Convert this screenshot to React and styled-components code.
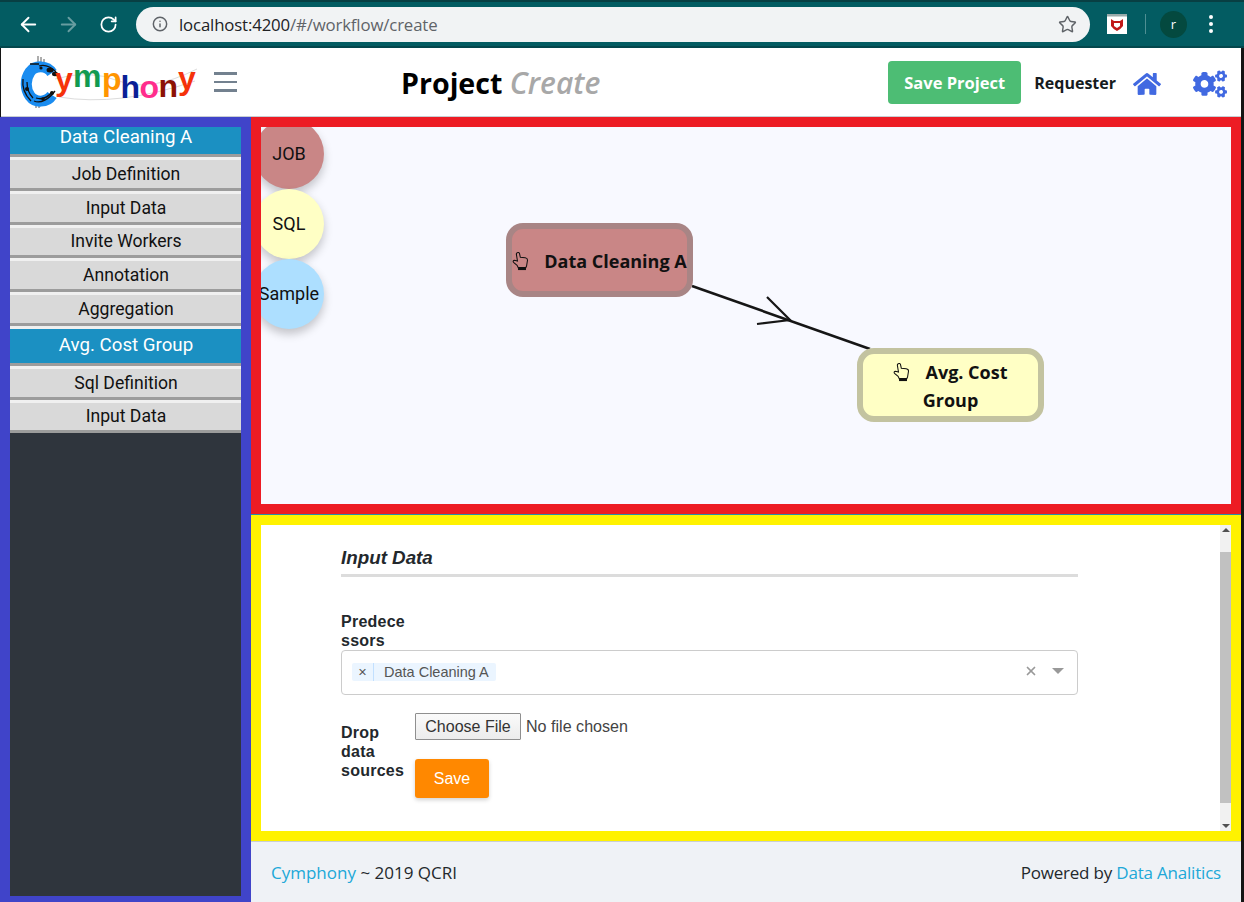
import React from 'react'
import styled, { createGlobalStyle } from 'styled-components'
import { ArrowLeft, ArrowRight, RotateCw, Info, Star, X } from 'lucide-react'
import { FaHome, FaCogs } from 'react-icons/fa'

const Global = createGlobalStyle`
  html, body { margin: 0; padding: 0; background: #141414; }
  * { box-sizing: border-box; }
`

const Logo = () => (
  <LogoSvg viewBox="0 0 180 54" width="180" height="54">
    <path d="M36 24 Q70 14 100 26 T178 14 M40 42 Q100 52 176 26" fill="none" stroke="#dcdcdc" strokeWidth="1" />
    <path d="M19 1 V13 M22 2 V13 M25 4 V14 M17 41 V53 M20 41 V53 M23 41 V51" stroke="#777" strokeWidth="1.2" fill="none" />
    <path d="M33 18 C28 10 16 10 11 17 C6 24 6 34 11 41 C16 48 28 48 33 40" fill="none" stroke="#1a8cf0" strokeWidth="11" />
    <path d="M11 9 H20 M20 11 C26 9 32 12 37 17 M4 24 C3 32 6 40 12 46 M8 27 C8 33 10 39 14 43 M15 46 C22 49 30 44 36 36 M17 43 C23 45 29 42 33 37" stroke="#111" strokeWidth="1.3" fill="none" />
    <ellipse cx="31" cy="15" rx="3.5" ry="2.5" fill="#111" />
    <ellipse cx="36" cy="19" rx="3" ry="2.2" fill="#111" />
    <circle cx="8" cy="34" r="2" fill="#111" />
    <circle cx="22" cy="13" r="1.6" fill="#111" />
    <circle cx="24" cy="44" r="1.8" fill="#111" />
    <circle cx="33" cy="38" r="2" fill="#111" />
    <LogoLetter x="36" y="35" fill="#f5320a">y</LogoLetter>
    <LogoLetter x="54" y="32" fill="#129a50">m</LogoLetter>
    <LogoLetter x="83" y="35" fill="#ff9500">p</LogoLetter>
    <LogoLetter x="101.5" y="43" fill="#0a1f96">h</LogoLetter>
    <LogoLetter x="120.5" y="43" fill="#ff2d8c">o</LogoLetter>
    <LogoLetter x="139.5" y="42" fill="#8c1205">n</LogoLetter>
    <LogoLetter x="159" y="34" fill="#f5320a">y</LogoLetter>
  </LogoSvg>
)

const Hand = () => (
  <HandSvg viewBox="0 0 18 20" width="17" height="20">
    <path d="M5.5 1.2 C6.6 .6 7.6 1 7.9 2 L8.8 6 L14 6.6 C15.6 6.9 16.6 8 16.4 9.4 L15.4 15.4 L14.6 17 H6.6 L5.4 14.6 L1.6 11.4 C.8 10.4 1.2 9.2 2.6 9.2 L5.8 10 L4.6 2.8 C4.5 2.1 4.9 1.5 5.5 1.2 Z" fill="none" stroke="#111" strokeWidth="1.1" />
    <rect x="6.4" y="16.4" width="8.4" height="3.2" fill="#111" />
  </HandSvg>
)

const App = () => {
  return (
    <Page>
      <Global />
      <Chrome>
        <NavIcon><ArrowLeft size={23} strokeWidth={2} /></NavIcon>
        <NavIcon faded><ArrowRight size={23} strokeWidth={2} /></NavIcon>
        <NavIcon shift><RotateCw size={19} strokeWidth={2.2} /></NavIcon>
        <Omnibox>
          <Info size={16} color="#5f6368" strokeWidth={2.2} />
          <Url>localhost:4200<UrlPath>/#/workflow/create</UrlPath></Url>
          <Star size={19} color="#5f6368" strokeWidth={1.8} />
        </Omnibox>
        <Extension>
          <svg viewBox="0 0 20 20" width="20" height="20">
            <rect width="20" height="20" fill="#fff" />
            <rect width="20" height="2.5" fill="#9aa" />
            <path d="M4 5 L7 7 H13 L16 5 V12 Q13 16 10 17 Q7 16 4 12 Z M7 9 V12 L10 14 L13 12 V9 Z" fill="#c01818" fillRule="evenodd" />
          </svg>
        </Extension>
        <ChromeDivider />
        <Avatar>r</Avatar>
        <Kebab><i /><i /><i /></Kebab>
      </Chrome>
      <Shell>
        <Header>
          <Logo />
          <Burger><i /><i /><i /></Burger>
          <Title>Project <em>Create</em></Title>
          <SaveProject>Save Project</SaveProject>
          <Role>Requester</Role>
          <HeaderIcon home><FaHome size={28} /></HeaderIcon>
          <HeaderIcon><FaCogs size={34} /></HeaderIcon>
        </Header>
        <Body>
          <Sidebar>
            <SideList>
              <SideHead>Data Cleaning A</SideHead>
              <SideItem>Job Definition</SideItem>
              <SideItem>Input Data</SideItem>
              <SideItem>Invite Workers</SideItem>
              <SideItem>Annotation</SideItem>
              <SideItem>Aggregation</SideItem>
              <SideHead>Avg. Cost Group</SideHead>
              <SideItem>Sql Definition</SideItem>
              <SideItem>Input Data</SideItem>
            </SideList>
          </Sidebar>
          <Main>
            <Canvas>
              <Palette>
                <Bubble color="#c98686">JOB</Bubble>
                <Bubble color="#ffffc5">SQL</Bubble>
                <Bubble color="#addfff">Sample</Bubble>
              </Palette>
              <Edge viewBox="0 0 970 378" width="970" height="378">
                <path d="M431 159 L609 222" stroke="#161616" strokeWidth="2.6" fill="none" />
                <path d="M506 170 L529 193 L496 197" stroke="#161616" strokeWidth="2.2" fill="none" />
              </Edge>
              <Node left={245} top={96} color="#c98686" edge="#a88585">
                <NodeText><Hand />Data Cleaning A</NodeText>
              </Node>
              <Node left={596} top={221} color="#ffffc5" edge="#c3c3a0">
                <NodeText><Hand />Avg. Cost<br />Group</NodeText>
              </Node>
            </Canvas>
            <FormPanel>
              <FormScroll>
                <Form>
                  <FormTitle>Input Data</FormTitle>
                  <FieldLabel>Predecessors</FieldLabel>
                  <SelectBox>
                    <Tag><TagClose>×</TagClose><TagText>Data Cleaning A</TagText></Tag>
                    <SelectClear><X size={14} strokeWidth={3} /></SelectClear>
                    <SelectCaret />
                  </SelectBox>
                  <UploadRow>
                    <FieldLabel drop>Drop data sources</FieldLabel>
                    <UploadCol>
                      <FileInput type="file" />
                      <SaveButton>Save</SaveButton>
                    </UploadCol>
                  </UploadRow>
                </Form>
              </FormScroll>
              <Scrollbar>
                <ScrollArrow />
                <ScrollTrack><ScrollThumb /></ScrollTrack>
                <ScrollArrow down />
              </Scrollbar>
            </FormPanel>
            <Footer>
              <FootLeft><FootLink>Cymphony</FootLink> ~ 2019 QCRI</FootLeft>
              <span>Powered by <FootLink>Data Analitics</FootLink></span>
            </Footer>
          </Main>
        </Body>
      </Shell>
    </Page>
  )
}

export default App

const Page = styled.div`
  height: 902px;
  display: flex;
  flex-direction: column;
  overflow: hidden;
`

const Chrome = styled.div`
  height: 48px;
  flex: none;
  display: flex;
  align-items: center;
  background: #035c62;
  border-top: 2px solid #083f43;
  border-bottom: 2px solid #04474c;
  padding-left: 17px;
  color: #fff;
`

const NavIcon = styled.div`
  width: 40px;
  display: flex;
  padding-left: ${p => (p.shift ? '2px' : '0')};
  opacity: ${p => (p.faded ? 0.4 : 1)};
`

const Omnibox = styled.div`
  width: 954px;
  height: 35px;
  margin-left: -1px;
  padding: 0 13px 0 16px;
  border-radius: 18px;
  background: #f1f3f4;
  display: flex;
  align-items: center;
`

const Url = styled.div`
  flex: 1;
  margin-left: 11px;
  font: 16.8px "Open Sans", sans-serif;
  letter-spacing: -0.15px;
  color: #202124;
`

const UrlPath = styled.span`
  color: #5f6368;
`

const Extension = styled.div`
  margin-left: 17px;
  height: 20px;
`

const ChromeDivider = styled.div`
  width: 1px;
  height: 20px;
  margin-left: 18px;
  background: #4f8f93;
`

const Avatar = styled.div`
  width: 27px;
  height: 27px;
  margin-left: 14px;
  border-radius: 50%;
  background: #04493f;
  display: flex;
  align-items: center;
  justify-content: center;
  font: 13px "Open Sans", sans-serif;
`

const Kebab = styled.div`
  margin-left: 22px;
  display: flex;
  flex-direction: column;
  gap: 3px;

  i {
    width: 4px;
    height: 4px;
    border-radius: 50%;
    background: #fff;
  }
`

const Shell = styled.div`
  flex: 1;
  min-height: 0;
  margin-right: 3px;
  display: flex;
  flex-direction: column;
`

const Header = styled.header`
  height: 69px;
  flex: none;
  display: flex;
  align-items: center;
  background: #fff;
  border-bottom: 1px solid #c8ced3;
  margin-left: 1px;
  padding-left: 18px;
  font-family: "Open Sans", sans-serif;
`

const LogoSvg = styled.svg`
  flex: none;
`

const LogoLetter = styled.text`
  font-family: "Liberation Sans", sans-serif;
  font-weight: 700;
  font-size: 32px;
`

const Burger = styled.div`
  width: 23px;
  margin-left: 15px;
  display: flex;
  flex-direction: column;
  gap: 6px;

  i {
    height: 2.5px;
    background: #73818f;
  }
`

const Title = styled.h1`
  margin: 0 0 0 164px;
  flex: 1;
  font-size: 28.6px;
  font-weight: 700;
  color: #000;

  em {
    color: #a8a8a8;
    font-size: 30px;
    font-weight: 600;
  }
`

const SaveProject = styled.button`
  width: 133px;
  height: 43px;
  border: 0;
  border-radius: 4px;
  background: #4dbd74;
  color: #fff;
  font: 700 16.5px "Open Sans", sans-serif;
`

const Role = styled.div`
  margin: 1px 0 0 13px;
  font-size: 16px;
  font-weight: 700;
  color: #151b1e;
`

const HeaderIcon = styled.div`
  margin: ${p => (p.home ? '3px 32px 0 17px' : '3px 14px 0 0')};
  display: flex;
  color: #4169e1;
`

const Body = styled.div`
  flex: 1;
  min-height: 0;
  display: flex;
`

const Sidebar = styled.aside`
  width: 251px;
  flex: none;
  border: 10px solid #4044c9;
  border-bottom-width: 6px;
  background: #2f353d;
  overflow: hidden;
`

const SideList = styled.div`
  margin-top: -10px;
  font-family: Roboto, sans-serif;
`

const SideItem = styled.div`
  height: 33.75px;
  padding: 0 0 0 1px;
  display: flex;
  align-items: center;
  justify-content: center;
  background: #d9d9d9;
  border-top: 3px solid #f0f0f0;
  border-bottom: 3px solid #9c9c9c;
  font-size: 17.6px;
  color: #111;
`

const SideHead = styled(SideItem)`
  height: 40px;
  padding-bottom: 1px;
  background: #1b90c2;
  font-size: 18.7px;
  color: #fff;
`

const Main = styled.main`
  flex: 1;
  min-width: 0;
  display: flex;
  flex-direction: column;
  background: #2a8ea8;
`

const Canvas = styled.section`
  height: 397px;
  flex: none;
  position: relative;
  overflow: hidden;
  border: 10px solid #ed1c24;
  background: #f8f9ff;
`

const Palette = styled.div`
  margin: -8px 0 0 -7px;
  width: 70px;
  display: flex;
  flex-direction: column;
`

const Bubble = styled.div`
  width: 70px;
  height: 70px;
  padding-bottom: 2px;
  border-radius: 50%;
  display: flex;
  align-items: center;
  justify-content: center;
  background: ${p => p.color};
  box-shadow: 0 5px 10px rgba(0, 0, 0, 0.22);
  font: 18px Roboto, sans-serif;
  color: #111;
`

const Edge = styled.svg`
  position: absolute;
  left: 0;
  top: 0;
`

const Node = styled.div`
  position: absolute;
  left: ${p => p.left}px;
  top: ${p => p.top}px;
  width: 187px;
  height: 74px;
  padding-top: 2px;
  border: 6px solid ${p => p.edge};
  border-radius: 17px;
  background: ${p => p.color};
  display: flex;
  align-items: center;
  justify-content: center;
  text-align: center;
  font: 700 18px/28px "Open Sans", sans-serif;
  color: #111;
`

const HandSvg = styled.svg`
  margin-right: 15px;
  vertical-align: -3px;
`

const NodeText = styled.span`
  display: block;
  white-space: nowrap;
`

const FormPanel = styled.section`
  height: 326px;
  margin-top: 1px;
  flex: none;
  display: flex;
  border: 10px solid #fff200;
  background: #fff;
`

const FormScroll = styled.div`
  flex: 1;
  min-width: 0;
  padding: 22px 0 0 80px;
`

const Form = styled.div`
  width: 737px;
  font-family: "Liberation Sans", sans-serif;
  color: #23282c;
`

const FormTitle = styled.h3`
  margin: 0 0 35px;
  padding-bottom: 5px;
  border-bottom: 3px solid #dcdcdc;
  font-size: 18.8px;
  line-height: 22px;
  font-weight: 700;
  font-style: italic;
`

const FieldLabel = styled.label`
  display: block;
  width: 70px;
  margin-top: ${p => (p.drop ? '10px' : '0')};
  overflow-wrap: anywhere;
  font-size: 16px;
  font-weight: 700;
  line-height: 19px;
  letter-spacing: 0.25px;
`

const SelectBox = styled.div`
  position: relative;
  height: 45px;
  padding: 12px 0 0 10px;
  border: 1px solid #ccc;
  border-radius: 4px;
`

const Tag = styled.div`
  display: inline-flex;
  height: 18px;
  align-items: center;
  background: #ebf5ff;
  border-radius: 2px;
  font-size: 14.5px;
  color: #555;
`

const TagClose = styled.span`
  width: 22px;
  line-height: 18px;
  text-align: center;
  border-right: 1px solid #c2e0ff;
`

const TagText = styled.span`
  padding: 0 7px 0 10px;
`

const SelectClear = styled.span`
  position: absolute;
  top: 13px;
  right: 39px;
  color: #999;
`

const SelectCaret = styled.span`
  position: absolute;
  top: 17px;
  right: 13px;
  border: 6px solid transparent;
  border-top: 6px solid #999;
  border-bottom: 0;
`

const UploadRow = styled.div`
  display: flex;
  margin-top: 18px;
`

const UploadCol = styled.div`
  margin-left: 4px;
  display: flex;
  flex-direction: column;
  align-items: flex-start;
`

const FileInput = styled.input`
  font: 16.1px "Liberation Sans", sans-serif;
  color: #444;

  &::file-selector-button {
    width: 106px;
    height: 27px;
    margin-right: 5px;
    padding: 0;
    font: 16px "Liberation Sans", sans-serif;
    color: #333;
    background: linear-gradient(#fafafa, #ececec);
    border: 1px solid #8f8f8f;
    border-radius: 1px;
  }
`

const SaveButton = styled.button`
  width: 74px;
  height: 39px;
  margin-top: 19px;
  border: 0;
  border-radius: 3px;
  background: #ff8800;
  color: #fff;
  font: 16px "Liberation Sans", sans-serif;
  box-shadow: 0 2px 4px rgba(0, 0, 0, 0.18);
`

const Scrollbar = styled.div`
  width: 11px;
  flex: none;
  display: flex;
  flex-direction: column;
  background: #f1f1f1;
`

const ScrollArrow = styled.div`
  height: 10px;
  flex: none;
  display: flex;
  align-items: center;
  justify-content: center;

  &::before {
    content: '';
    border: 4px solid transparent;
    ${p => (p.down ? 'border-top: 4px solid #505050; border-bottom: 0;' : 'border-bottom: 4px solid #505050; border-top: 0;')}
  }
`

const ScrollTrack = styled.div`
  flex: 1;
  padding: 17px 0 18px;
  display: flex;
`

const ScrollThumb = styled.div`
  flex: 1;
  background: #c1c1c1;
`

const Footer = styled.footer`
  flex: 1;
  display: flex;
  align-items: center;
  justify-content: space-between;
  padding: 0 20px;
  background: #eff2f6;
  border-top: 1px solid #c8ced3;
  font: 17px "Open Sans", sans-serif;
  letter-spacing: -0.2px;
  color: #23282c;
`

const FootLeft = styled.span`
  letter-spacing: 0;
`

const FootLink = styled.a`
  color: #20a8d8;
`
